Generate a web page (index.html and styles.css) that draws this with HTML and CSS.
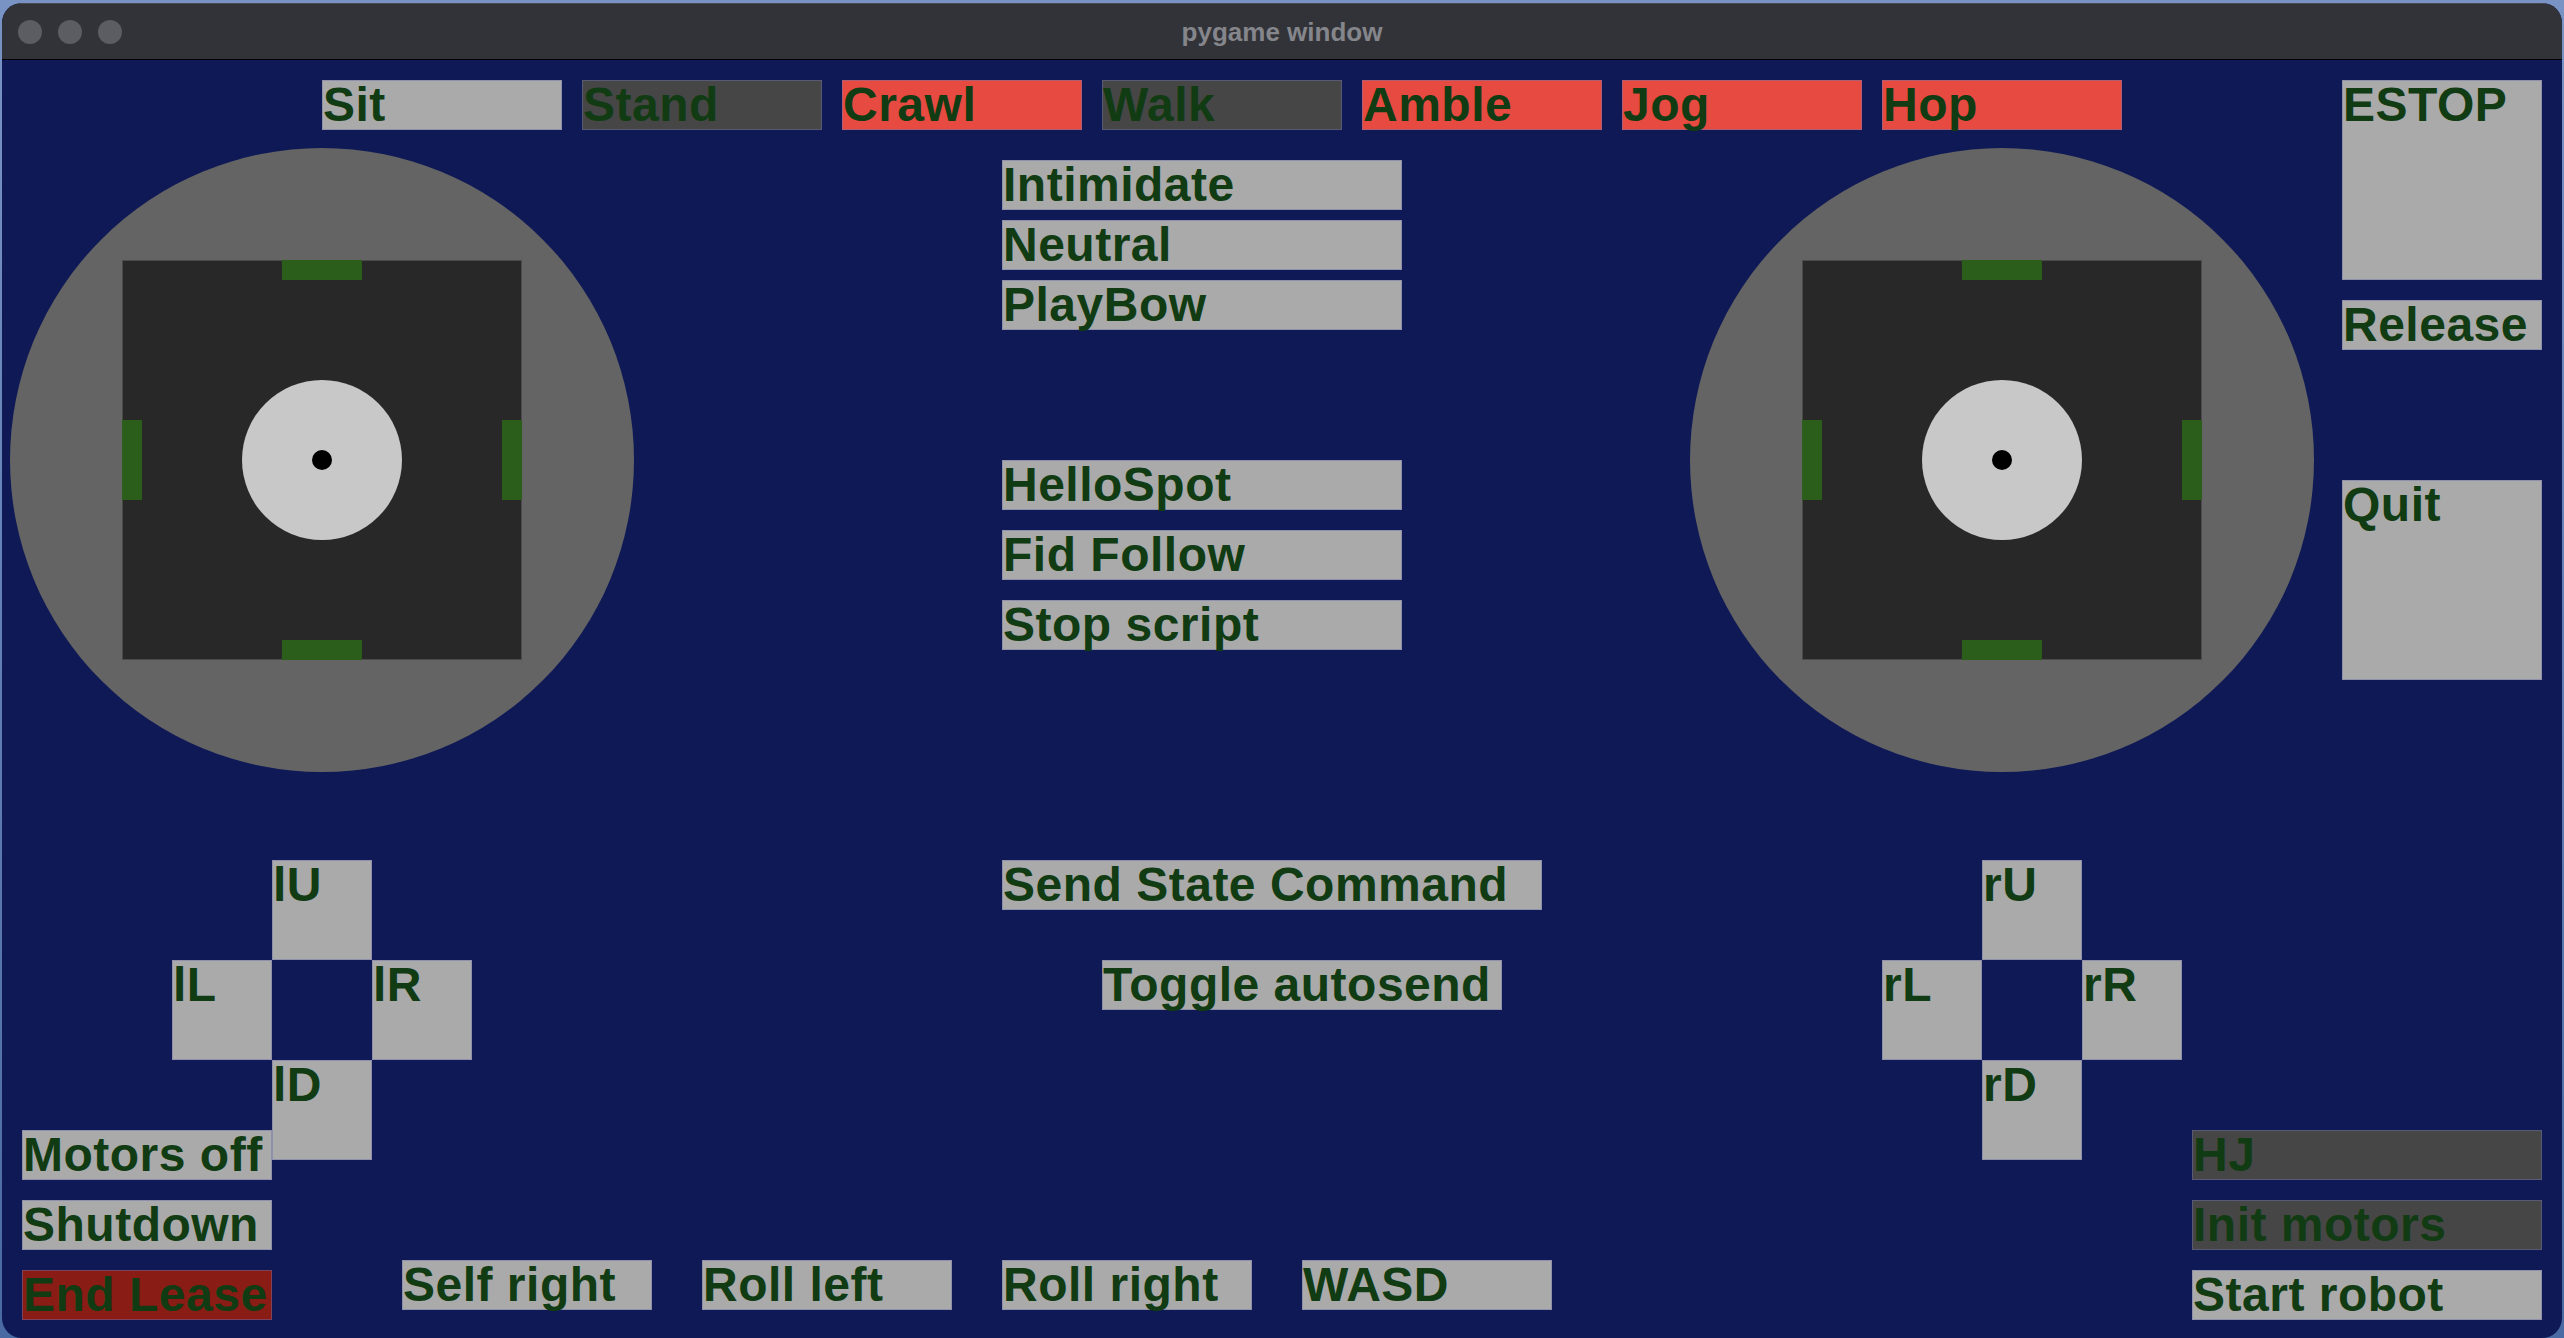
FILE: index.html
```html
<!DOCTYPE html>
<html lang="en">
<head>
<meta charset="utf-8">
<title>pygame window</title>
<link rel="stylesheet" href="styles.css">
</head>
<body>
<div class="window">
  <div class="titlebar">
    <div class="lights"><span class="light"></span><span class="light"></span><span class="light"></span></div>
    <div class="title">pygame window</div>
    <div class="spacer"></div>
  </div>
  <div class="canvas">
    <div class="btn gray b-sit">Sit</div>
    <div class="btn dark b-stand">Stand</div>
    <div class="btn red b-crawl">Crawl</div>
    <div class="btn dark b-walk">Walk</div>
    <div class="btn red b-amble">Amble</div>
    <div class="btn red b-jog">Jog</div>
    <div class="btn red b-hop">Hop</div>

    <div class="btn gray b-estop">ESTOP</div>
    <div class="btn gray b-release">Release</div>
    <div class="btn gray b-quit">Quit</div>

    <div class="btn gray b-intimidate">Intimidate</div>
    <div class="btn gray b-neutral">Neutral</div>
    <div class="btn gray b-playbow">PlayBow</div>
    <div class="btn gray b-hello">HelloSpot</div>
    <div class="btn gray b-fid">Fid Follow</div>
    <div class="btn gray b-stop">Stop script</div>
    <div class="btn gray b-send">Send State Command</div>
    <div class="btn gray b-toggle">Toggle autosend</div>

    <div class="joystick js-left">
      <div class="ring">
        <div class="pad">
          <span class="mark mark-top"></span>
          <span class="mark mark-left"></span>
          <div class="knob"><span class="dot"></span></div>
          <span class="mark mark-right"></span>
          <span class="mark mark-bottom"></span>
        </div>
      </div>
    </div>
    <div class="joystick js-right">
      <div class="ring">
        <div class="pad">
          <span class="mark mark-top"></span>
          <span class="mark mark-left"></span>
          <div class="knob"><span class="dot"></span></div>
          <span class="mark mark-right"></span>
          <span class="mark mark-bottom"></span>
        </div>
      </div>
    </div>

    <div class="btn gray d-lu">lU</div>
    <div class="btn gray d-ll">lL</div>
    <div class="btn gray d-lr">lR</div>
    <div class="btn gray d-ld">lD</div>

    <div class="btn gray d-ru">rU</div>
    <div class="btn gray d-rl">rL</div>
    <div class="btn gray d-rr">rR</div>
    <div class="btn gray d-rd">rD</div>

    <div class="btn gray b-motors">Motors off</div>
    <div class="btn gray b-shutdown">Shutdown</div>
    <div class="btn darkred b-lease">End Lease</div>

    <div class="btn gray b-selfright">Self right</div>
    <div class="btn gray b-rollleft">Roll left</div>
    <div class="btn gray b-rollright">Roll right</div>
    <div class="btn gray b-wasd">WASD</div>

    <div class="btn dark b-hj">HJ</div>
    <div class="btn dark b-init">Init motors</div>
    <div class="btn gray b-start">Start robot</div>
  </div>
</div>
</body>
</html>
```

FILE: styles.css
```css
html, body {
  margin: 0;
  padding: 0;
}
body {
  width: 2564px;
  height: 1338px;
  overflow: hidden;
  background: linear-gradient(180deg, #7893c4 0%, #4a6aa3 100%);
}
.window {
  margin: 3px 2px 0 2px;
  width: 2560px;
  height: 1335px;
  border-radius: 20px;
  overflow: hidden;
  background: #0f1955;
  display: flex;
  flex-direction: column;
}
.titlebar {
  flex: none;
  height: 56px;
  background: #323338;
  border-bottom: 1px solid #000;
  box-shadow: inset 0 1px 0 rgba(255, 255, 255, 0.12);
  display: grid;
  grid-template-columns: 1fr auto 1fr;
  align-items: center;
}
.lights {
  display: flex;
  gap: 16px;
  padding-left: 16px;
  padding-top: 2px;
}
.light {
  width: 24px;
  height: 24px;
  border-radius: 50%;
  background: #5c5d62;
}
.title {
  font-family: "Liberation Sans", Arial, sans-serif;
  font-weight: bold;
  font-size: 26px;
  color: #85868b;
  padding-top: 2px;
}

/* pygame canvas: 10px cells (5pt at 2x) */
.canvas {
  flex: none;
  display: grid;
  grid-template-columns: repeat(256, 10px);
  grid-template-rows: repeat(128, 10px);
}

.btn {
  box-sizing: border-box;
  border: 1px solid rgba(110, 115, 175, 0.45);
  font-family: "Liberation Sans", Arial, sans-serif;
  font-weight: bold;
  font-size: 48px;
  line-height: 47px;
  letter-spacing: 0.5px;
  color: #113b12;
  white-space: nowrap;
  padding-left: 0;
}
.gray { background: #aaaaaa; }
.dark { background: #464646; }
.red { background: #e64a41; }
.darkred { background: #8a1c16; }

/* top row */
.b-sit   { grid-area: 3 / 33 / 8 / 57; }
.b-stand { grid-area: 3 / 59 / 8 / 83; }
.b-crawl { grid-area: 3 / 85 / 8 / 109; }
.b-walk  { grid-area: 3 / 111 / 8 / 135; }
.b-amble { grid-area: 3 / 137 / 8 / 161; }
.b-jog   { grid-area: 3 / 163 / 8 / 187; }
.b-hop   { grid-area: 3 / 189 / 8 / 213; }

/* right column */
.b-estop   { grid-area: 3 / 235 / 23 / 255; }
.b-release { grid-area: 25 / 235 / 30 / 255; }
.b-quit    { grid-area: 43 / 235 / 63 / 255; }

/* centre column */
.b-intimidate { grid-area: 11 / 101 / 16 / 141; }
.b-neutral    { grid-area: 17 / 101 / 22 / 141; }
.b-playbow    { grid-area: 23 / 101 / 28 / 141; }
.b-hello      { grid-area: 41 / 101 / 46 / 141; }
.b-fid        { grid-area: 48 / 101 / 53 / 141; }
.b-stop       { grid-area: 55 / 101 / 60 / 141; }
.b-send       { grid-area: 81 / 101 / 86 / 155; }
.b-toggle     { grid-area: 91 / 111 / 96 / 151; }

/* joysticks */
.joystick {
  display: flex;
  align-items: center;
  justify-content: center;
}
.js-left  { grid-area: 9 / 1 / 73 / 65; }
.js-right { grid-area: 9 / 169 / 73 / 233; }
.ring {
  width: 624px;
  height: 624px;
  border-radius: 50%;
  background: #646464;
  display: flex;
  align-items: center;
  justify-content: center;
}
.pad {
  width: 400px;
  height: 400px;
  background: #282828;
  box-shadow: inset 0 0 0 1px #4a4a4a;
  display: grid;
  grid-template-columns: 20px 1fr 20px;
  grid-template-rows: 20px 1fr 20px;
}
.mark { background: #2b5e1a; }
.mark-top    { grid-area: 1 / 2; justify-self: center; width: 80px; height: 20px; }
.mark-bottom { grid-area: 3 / 2; justify-self: center; width: 80px; height: 20px; }
.mark-left   { grid-area: 2 / 1; align-self: center; width: 20px; height: 80px; }
.mark-right  { grid-area: 2 / 3; align-self: center; width: 20px; height: 80px; }
.knob {
  grid-area: 2 / 2;
  justify-self: center;
  align-self: center;
  width: 160px;
  height: 160px;
  border-radius: 50%;
  background: #c8c8c8;
  display: flex;
  align-items: center;
  justify-content: center;
}
.dot {
  width: 20px;
  height: 20px;
  border-radius: 50%;
  background: #000;
}

/* d-pads */
.d-lu { grid-area: 81 / 28 / 91 / 38; }
.d-ll { grid-area: 91 / 18 / 101 / 28; }
.d-lr { grid-area: 91 / 38 / 101 / 48; }
.d-ld { grid-area: 101 / 28 / 111 / 38; }
.d-ru { grid-area: 81 / 199 / 91 / 209; }
.d-rl { grid-area: 91 / 189 / 101 / 199; }
.d-rr { grid-area: 91 / 209 / 101 / 219; }
.d-rd { grid-area: 101 / 199 / 111 / 209; }

/* bottom left */
.b-motors   { grid-area: 108 / 3 / 113 / 28; }
.b-shutdown { grid-area: 115 / 3 / 120 / 28; }
.b-lease    { grid-area: 122 / 3 / 127 / 28; }

/* bottom row */
.b-selfright { grid-area: 121 / 41 / 126 / 66; }
.b-rollleft  { grid-area: 121 / 71 / 126 / 96; }
.b-rollright { grid-area: 121 / 101 / 126 / 126; }
.b-wasd      { grid-area: 121 / 131 / 126 / 156; }

/* bottom right */
.b-hj    { grid-area: 108 / 220 / 113 / 255; }
.b-init  { grid-area: 115 / 220 / 120 / 255; }
.b-start { grid-area: 122 / 220 / 127 / 255; }
```
